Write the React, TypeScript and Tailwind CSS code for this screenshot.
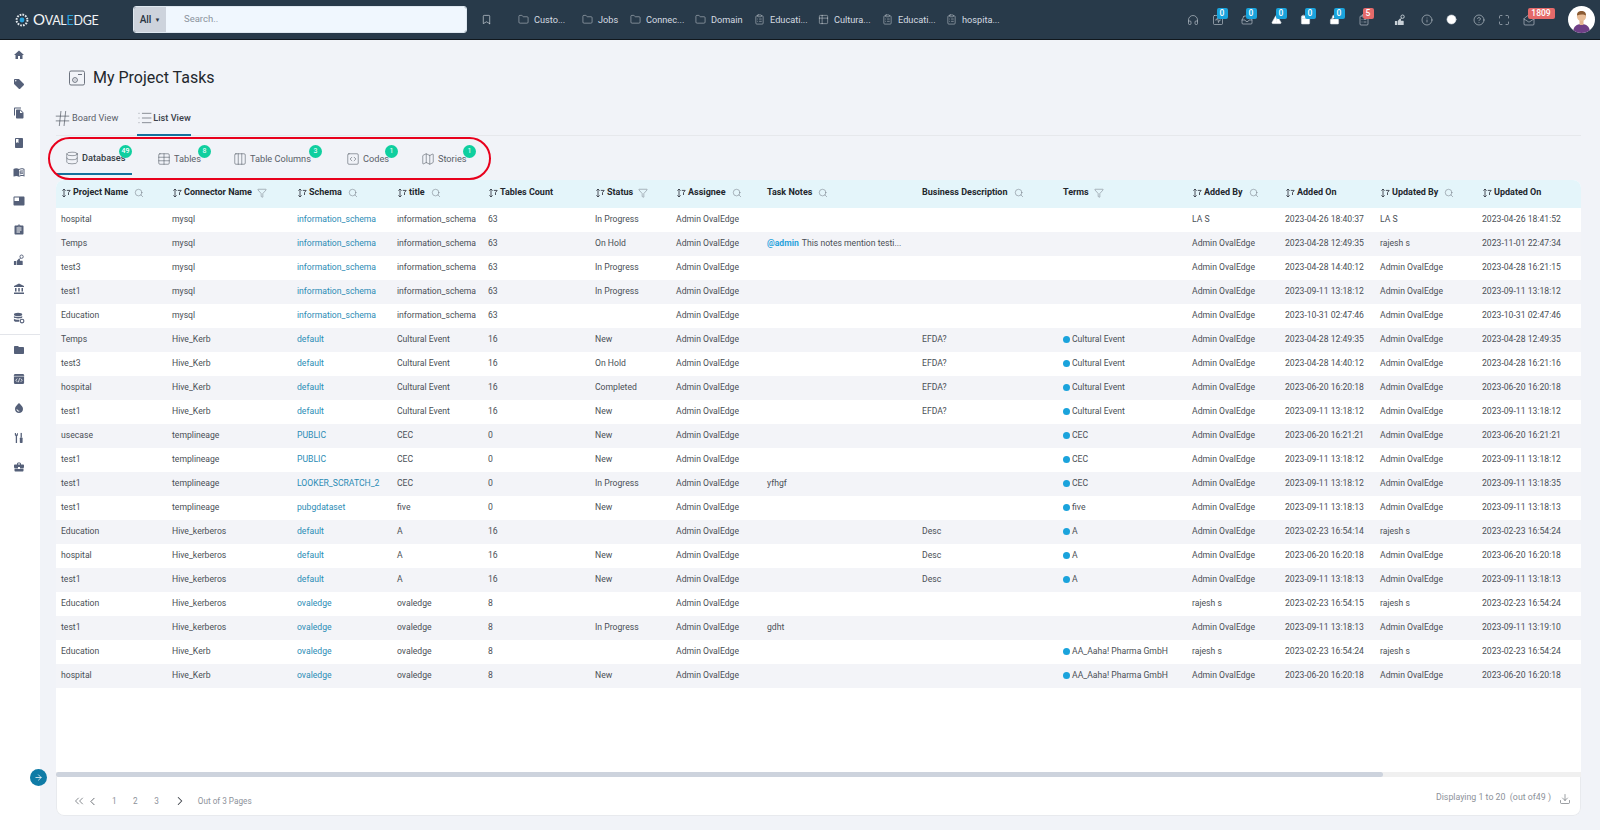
import type { ReactNode } from "react";
import {
  Headphones,
  SquareActivity,
  Inbox,
  Info,
  CircleHelp,
  Maximize,
  MailOpen,
  Search,
  Funnel,
  Bookmark,
  Folder,
  ClipboardList,
  Table2,
  Hash,
  List,
  Database,
  Table,
  Columns3,
  SquareCode,
  Map,
  ChevronsLeft,
  ChevronLeft,
  ChevronRight,
  Download,
  ArrowRight,
  TriangleAlert,
  LockOpen,
  Calendar,
  Circle,
} from "lucide-react";
import {
  MdHome,
  MdLocalOffer,
  MdFileCopy,
  MdBook,
  MdMenuBook,
  MdFeaturedVideo,
  MdAssignment,
  MdAccountBalance,
  MdFolder,
  MdWaterDrop,
  MdBusinessCenter,
} from "react-icons/md";

const cols =
  "grid grid-cols-[111px_125px_100px_91px_107px_81px_91px_155px_141px_129px_93px_95px_102px_105px]";

function HandRing({ size = 13, className = "" }: { size?: number; className?: string }) {
  return (
    <svg width={size} height={size} viewBox="0 0 13 13" fill="currentColor" className={className}>
      <rect x="1" y="7.5" width="2.4" height="4.5" rx="0.4" />
      <path d="M4 7.5 6.5 5l1 .6v1.6h2.2c.6 0 .8.5.8 1V12H4z" />
      <circle cx="9.3" cy="2.9" r="1.8" fill="none" stroke="currentColor" strokeWidth="1" />
      <path d="M8.2 4.4 7 5.8" stroke="currentColor" strokeWidth="1" />
    </svg>
  );
}

function DbGear({ size = 13, className = "" }: { size?: number; className?: string }) {
  return (
    <svg width={size} height={size} viewBox="0 0 13 13" fill="currentColor" className={className}>
      <ellipse cx="5.5" cy="2.6" rx="4.5" ry="1.8" />
      <path d="M1 4.2c1 1.3 8 1.3 9 0v1.8c-1 1.3-8 1.3-9 0zM1 7.3c1 1.3 5 1.3 6 1l-.6 2.3C4 10.9 1.6 10.5 1 9.4z" />
      <circle cx="9.8" cy="9.8" r="2" fill="none" stroke="currentColor" strokeWidth="1.2" />
    </svg>
  );
}

function CodeBox({ size = 13, className = "" }: { size?: number; className?: string }) {
  return (
    <svg width={size} height={size} viewBox="0 0 13 13" className={className}>
      <rect x="1" y="1" width="11" height="11" rx="1.4" fill="currentColor" />
      <path d="M1 3.6h11" stroke="#fff" strokeWidth="0.6" />
      <path d="M4.6 6 3 7.8l1.6 1.8M8.4 6 10 7.8 8.4 9.6M7.2 5.6 5.8 10" fill="none" stroke="#fff" strokeWidth="0.8" />
    </svg>
  );
}

function Tools({ size = 13, className = "" }: { size?: number; className?: string }) {
  return (
    <svg width={size} height={size} viewBox="0 0 13 13" fill="currentColor" className={className}>
      <path d="M2 1v2.4l1 .9V12h1.4V4.3l1-.9V1H4.6v1.8H3.2V1z" />
      <rect x="8.2" y="1" width="1.4" height="5" />
      <rect x="7.4" y="6" width="3" height="6" rx="0.8" />
    </svg>
  );
}

const sideTop = [MdHome, MdLocalOffer, MdFileCopy, MdBook, MdMenuBook, MdFeaturedVideo, MdAssignment, HandRing, MdAccountBalance, DbGear];
const sideBottom = [MdFolder, CodeBox, MdWaterDrop, Tools, MdBusinessCenter];

const shortcuts = [
  { icon: Folder, label: "Custo...", w: "w-[64px]" },
  { icon: Folder, label: "Jobs", w: "w-[48px]" },
  { icon: Folder, label: "Connec...", w: "w-[65px]" },
  { icon: Folder, label: "Domain", w: "w-[59px]" },
  { icon: ClipboardList, label: "Educati...", w: "w-[64px]" },
  { icon: Table2, label: "Cultura...", w: "w-[64px]" },
  { icon: ClipboardList, label: "Educati...", w: "w-[64px]" },
  { icon: ClipboardList, label: "hospita...", w: "w-[64px]" },
];

const headerIcons = [
  { icon: Headphones, ml: "" },
  { icon: SquareActivity, ml: "ml-[11px]", badge: "0" },
  { icon: Inbox, ml: "ml-[15px]", badge: "0" },
  { icon: TriangleAlert, ml: "ml-[16px]", badge: "0", solid: true },
  { icon: Calendar, ml: "ml-[15px]", badge: "0", solid: true },
  { icon: LockOpen, ml: "ml-[15px]", badge: "0", solid: true },
  { icon: ClipboardList, ml: "ml-[15px]", badge: "5", red: true },
  { icon: HandRing, ml: "ml-[22px]" },
  { icon: Info, ml: "ml-[13px]" },
  { icon: Circle, ml: "ml-[11px]", solid: true },
  { icon: CircleHelp, ml: "ml-[13px]" },
  { icon: Maximize, ml: "ml-[11px]" },
  { icon: MailOpen, ml: "ml-[11px]", badge: "1809", red: true },
];

const columns = [
  { label: "Project Name", sort: true, tool: "search" },
  { label: "Connector Name", sort: true, tool: "filter" },
  { label: "Schema", sort: true, tool: "search" },
  { label: "title", sort: true, tool: "search" },
  { label: "Tables Count", sort: true },
  { label: "Status", sort: true, tool: "filter" },
  { label: "Assignee", sort: true, tool: "search" },
  { label: "Task Notes", tool: "search" },
  { label: "Business Description", tool: "search" },
  { label: "Terms", tool: "filter" },
  { label: "Added By", sort: true, tool: "search" },
  { label: "Added On", sort: true },
  { label: "Updated By", sort: true, tool: "search" },
  { label: "Updated On", sort: true },
];

const AO = "Admin OvalEdge";
const IS = "information_schema";
const CE = "Cultural Event";
const AA = "AA_Aaha! Pharma GmbH";

// project, connector, schema, title, count, status, notes, description, term, addedBy, addedOn, updatedBy, updatedOn
const rows = [
  ["hospital", "mysql", IS, IS, "63", "In Progress", "", "", "", "LA S", "2023-04-26 18:40:37", "LA S", "2023-04-26 18:41:52"],
  ["Temps", "mysql", IS, IS, "63", "On Hold", "@", "", "", AO, "2023-04-28 12:49:35", "rajesh s", "2023-11-01 22:47:34"],
  ["test3", "mysql", IS, IS, "63", "In Progress", "", "", "", AO, "2023-04-28 14:40:12", AO, "2023-04-28 16:21:15"],
  ["test1", "mysql", IS, IS, "63", "In Progress", "", "", "", AO, "2023-09-11 13:18:12", AO, "2023-09-11 13:18:12"],
  ["Education", "mysql", IS, IS, "63", "", "", "", "", AO, "2023-10-31 02:47:46", AO, "2023-10-31 02:47:46"],
  ["Temps", "Hive_Kerb", "default", CE, "16", "New", "", "EFDA?", CE, AO, "2023-04-28 12:49:35", AO, "2023-04-28 12:49:35"],
  ["test3", "Hive_Kerb", "default", CE, "16", "On Hold", "", "EFDA?", CE, AO, "2023-04-28 14:40:12", AO, "2023-04-28 16:21:16"],
  ["hospital", "Hive_Kerb", "default", CE, "16", "Completed", "", "EFDA?", CE, AO, "2023-06-20 16:20:18", AO, "2023-06-20 16:20:18"],
  ["test1", "Hive_Kerb", "default", CE, "16", "New", "", "EFDA?", CE, AO, "2023-09-11 13:18:12", AO, "2023-09-11 13:18:12"],
  ["usecase", "templineage", "PUBLIC", "CEC", "0", "New", "", "", "CEC", AO, "2023-06-20 16:21:21", AO, "2023-06-20 16:21:21"],
  ["test1", "templineage", "PUBLIC", "CEC", "0", "New", "", "", "CEC", AO, "2023-09-11 13:18:12", AO, "2023-09-11 13:18:12"],
  ["test1", "templineage", "LOOKER_SCRATCH_2", "CEC", "0", "In Progress", "yfhgf", "", "CEC", AO, "2023-09-11 13:18:12", AO, "2023-09-11 13:18:35"],
  ["test1", "templineage", "pubgdataset", "five", "0", "New", "", "", "five", AO, "2023-09-11 13:18:13", AO, "2023-09-11 13:18:13"],
  ["Education", "Hive_kerberos", "default", "A", "16", "", "", "Desc", "A", AO, "2023-02-23 16:54:14", "rajesh s", "2023-02-23 16:54:24"],
  ["hospital", "Hive_kerberos", "default", "A", "16", "New", "", "Desc", "A", AO, "2023-06-20 16:20:18", AO, "2023-06-20 16:20:18"],
  ["test1", "Hive_kerberos", "default", "A", "16", "New", "", "Desc", "A", AO, "2023-09-11 13:18:13", AO, "2023-09-11 13:18:13"],
  ["Education", "Hive_kerberos", "ovaledge", "ovaledge", "8", "", "", "", "", "rajesh s", "2023-02-23 16:54:15", "rajesh s", "2023-02-23 16:54:24"],
  ["test1", "Hive_kerberos", "ovaledge", "ovaledge", "8", "In Progress", "gdht", "", "", AO, "2023-09-11 13:18:13", AO, "2023-09-11 13:19:10"],
  ["Education", "Hive_Kerb", "ovaledge", "ovaledge", "8", "", "", "", AA, "rajesh s", "2023-02-23 16:54:24", "rajesh s", "2023-02-23 16:54:24"],
  ["hospital", "Hive_Kerb", "ovaledge", "ovaledge", "8", "New", "", "", AA, AO, "2023-06-20 16:20:18", AO, "2023-06-20 16:20:18"],
];

const tabs = [
  { icon: Database, label: "Databases", count: "49", w: "w-[76px] mr-4", left: "left-[63px]", active: true },
  { icon: Table, label: "Tables", count: "8", w: "w-[76px]", left: "left-[50px]" },
  { icon: Columns3, label: "Table Columns", count: "3", w: "w-[113px]", left: "left-[85px]" },
  { icon: SquareCode, label: "Codes", count: "1", w: "w-[75px]", left: "left-[48px]" },
  { icon: Map, label: "Stories", count: "1", w: "w-[90px]", left: "left-[51px]" },
];

function SortIcon() {
  return (
    <svg width="10" height="10" viewBox="0 0 10 10" fill="none" stroke="#3a3f4a" strokeWidth="0.9" className="mr-[2px] shrink-0">
      <path d="M3 9V1M1.4 2.6 3 1l1.6 1.6M1.4 7.4 3 9l1.6-1.6" />
      <path d="M5.8 2.4h3.4L7.5 4.6v2.4" />
    </svg>
  );
}

function Cell({ children }: { children?: ReactNode }) {
  return <div className="flex items-center px-[5px] pb-px whitespace-nowrap overflow-hidden">{children}</div>;
}

function AppHeader() {
  return (
    <header className="h-10 shrink-0 flex items-center bg-[#283a4a] border-b border-[#10171d]">
      <div className="w-[133px] pl-[14px] flex items-center gap-[3px] shrink-0">
        <svg width="16" height="16" viewBox="0 0 16 16">
          <circle cx="8" cy="8" r="5.4" fill="none" stroke="#dfe5ea" strokeWidth="2" strokeDasharray="1.7 1.1" />
          <circle cx="8" cy="8" r="2.4" fill="#2aa3dc" />
        </svg>
        <span className="text-[12.5px] leading-none text-[#f2f4f6] tracking-[-0.3px] whitespace-nowrap font-['Lato',sans-serif]">
          <span className="text-[15px]">O</span>VAL<span className="text-[#2aa3dc]">E</span>DGE
        </span>
      </div>
      <div className="w-[334px] h-[27px] flex shrink-0 rounded-[3px] overflow-hidden border border-[#dfe8f0]">
        <div className="w-[32px] bg-[#cdd3dc] flex items-center justify-center text-[10px] font-medium text-[#29333f]">
          All<span className="ml-[3px] text-[6px]">▼</span>
        </div>
        <div className="flex-1 bg-[#f0f7fe] pl-[18px] flex items-center text-[9.5px] text-[#8b939d]">Search..</div>
      </div>
      <Bookmark size={11} strokeWidth={1.4} className="ml-[14px] text-[#d8dee4] shrink-0" />
      <div className="flex items-center ml-[26px]">
        {shortcuts.map((s, i) => (
          <div key={i} className={`${s.w} flex items-center gap-[5px] text-[9.2px] text-[#d5dbe1] shrink-0 whitespace-nowrap`}>
            <s.icon size={11} strokeWidth={1.1} className="shrink-0 text-[#cfd6dc]" />
            {s.label}
          </div>
        ))}
      </div>
      <div className="ml-auto flex items-center pr-[5.5px]">
        {headerIcons.map((h, i) => (
          <div key={i} className={`relative w-[14px] h-[14px] flex items-center justify-center ${h.ml}`}>
            {h.icon === HandRing ? (
              <HandRing size={12} className="text-[#c9d1d8]" />
            ) : (
              <h.icon
                size={h.solid ? 11 : 12}
                strokeWidth={1.2}
                className="text-[#c9d1d8]"
                fill={h.solid ? "#ffffff" : "none"}
              />
            )}
            {h.badge && (
              <span
                className={`absolute top-[-4.5px] left-[6px] h-[11px] px-[3px] min-w-[11px] rounded-[2px] flex items-center justify-center text-[8.5px] font-medium text-white ${
                  h.red ? "bg-[#e56a6a]" : "bg-[#1aa3dc]"
                } ${h.badge.length > 1 ? "w-[27px]" : ""}`}
              >
                {h.badge}
              </span>
            )}
          </div>
        ))}
        <div className="ml-[32px] w-[27px] h-[27px] rounded-full bg-white overflow-hidden flex items-end justify-center">
          <svg width="27" height="27" viewBox="0 0 27 27">
            <path d="M5 27c0-7 4-9 8.5-9S22 20 22 27z" fill="#6e3f86" />
            <rect x="11.5" y="14" width="4" height="5" fill="#e3b48f" />
            <circle cx="13.5" cy="10.5" r="4.6" fill="#e8bd98" />
            <path d="M9 9.5C9 6 11 5 13.5 5S18 6 18 9.5c-2-1.5-6-1.5-9 0z" fill="#8a5a32" />
          </svg>
        </div>
      </div>
    </header>
  );
}

function Sidebar() {
  return (
    <aside className="w-10 shrink-0 bg-white flex flex-col items-center">
      {sideTop.map((Icon, i) => (
        <div key={i} className="h-[29.3px] flex items-center justify-center pr-[3px] shrink-0">
          <Icon size={12} className="text-[#556079]" />
        </div>
      ))}
      <div className="w-full h-px bg-[#e3e5ea] mt-[1px]" />
      {sideBottom.map((Icon, i) => (
        <div key={i} className="h-[29.3px] flex items-center justify-center pr-[3px] shrink-0">
          <Icon size={12} className="text-[#556079]" />
        </div>
      ))}
    </aside>
  );
}

export default function App() {
  return (
    <div className="relative w-[1600px] h-[830px] overflow-hidden flex flex-col bg-[#f1f3f8] font-['Roboto',sans-serif]">
      <AppHeader />
      <div className="flex flex-1 min-h-0">
        <Sidebar />
        <main className="flex-1 min-w-0 pl-4 pr-[19px]">
          {/* Title */}
          <div className="h-[20px] mt-[28px] flex items-center">
            <svg width="16" height="16" viewBox="0 0 16 16" fill="none" stroke="#5d6470" strokeWidth="0.9" className="ml-[13px] mr-[8px]">
              <rect x="0.5" y="1" width="15" height="14" rx="1.5" />
              <circle cx="6" cy="10" r="2.4" />
              <path d="M9 4.5h4M6 9.5v1" />
            </svg>
            <h1 className="text-[16px] font-normal text-[#23272d]">My Project Tasks</h1>
          </div>

          {/* Board / list switch */}
          <div className="h-[32px] mt-[16px] flex border-b border-[#e6e8ec]">
            <div className="flex items-center h-[32px] pb-[4px] text-[9.2px] text-[#5a6068] mr-[19px]">
              <Hash size={19} strokeWidth={0.8} className="-ml-[3px] text-[#444b55]" />
              Board View
            </div>
            <div className="flex items-center h-[32px] pb-[2px] w-[54px] border-b-2 border-[#14719c] text-[9.2px] font-medium text-[#3a4048] whitespace-nowrap">
              <List size={16} strokeWidth={0.9} className="text-[#444b55] shrink-0" />
              List View
            </div>
          </div>

          {/* Task type tabs */}
          <div className="h-[39px] flex">
            {tabs.map((t) => (
              <div
                key={t.label}
                className={`relative ${t.w} h-[39px] pl-[9px] pt-[6px] flex items-center gap-[3px] text-[9.2px] whitespace-nowrap ${
                  t.active ? "border-b-2 border-[#14719c] font-medium text-[#333a42]" : "text-[#5a6068]"
                }`}
              >
                <t.icon size={14} strokeWidth={0.9} className="shrink-0 text-[#444b55]" />
                {t.label}
                <span className={`absolute top-[9px] ${t.left} h-[13px] min-w-[13px] rounded-full bg-[#0fcf9f] flex items-center justify-center text-[7px] text-white`}>
                  {t.count}
                </span>
              </div>
            ))}
          </div>

          {/* Table */}
          <div className="mt-[5px] bg-white rounded-t-lg rounded-b-lg text-[8.65px] text-[#4a4f56]">
            <div className={`${cols} h-[28px] bg-[#e4f5fa] rounded-t-lg text-[9px] text-[#23272d] font-bold`}>
              {columns.map((c) => (
                <div key={c.label} className="flex items-center px-[5px] pb-[3px] whitespace-nowrap">
                  {c.sort && <SortIcon />}
                  {c.label}
                  {c.tool === "search" && <Search size={10} strokeWidth={1} className="ml-[6px] text-[#555b66]" />}
                  {c.tool === "filter" && <Funnel size={10} strokeWidth={1} className="ml-[5px] text-[#555b66]" />}
                </div>
              ))}
            </div>
            {rows.map((r, i) => (
              <div key={i} className={`${cols} h-[24px] ${i % 2 === 1 ? "bg-[#f3f4f8]" : "bg-white"}`}>
                <Cell>{r[0]}</Cell>
                <Cell>{r[1]}</Cell>
                <Cell>
                  <span className="text-[#2b8cb5]">{r[2]}</span>
                </Cell>
                <Cell>{r[3]}</Cell>
                <Cell>{r[4]}</Cell>
                <Cell>{r[5]}</Cell>
                <Cell>{AO}</Cell>
                <Cell>
                  {r[6] === "@" ? (
                    <>
                      <span className="text-[#2aa3dc] font-bold mr-[3px]">@admin</span>This notes mention testi...
                    </>
                  ) : (
                    r[6]
                  )}
                </Cell>
                <Cell>{r[7]}</Cell>
                <Cell>
                  {r[8] && <span className="w-[7px] h-[7px] rounded-full bg-[#1aa3dc] mr-[2px] shrink-0" />}
                  {r[8]}
                </Cell>
                <Cell>{r[9]}</Cell>
                <Cell>{r[10]}</Cell>
                <Cell>{r[11]}</Cell>
                <Cell>{r[12]}</Cell>
              </div>
            ))}
            <div className="h-[84px]" />
            <div className="h-[5px] bg-[#f0f0f0]">
              <div className="h-full w-[1327px] bg-[#cdd3dd] rounded-[3px]" />
            </div>
            <div className="h-[39px] flex items-center border border-t-0 border-[#e8eaee] rounded-b-lg text-[#8d929a] text-[8.2px] pt-[10px] pl-[15px] pr-[9px]">
              <ChevronsLeft size={14} strokeWidth={1.2} className="text-[#555a62]" />
              <ChevronLeft size={13} strokeWidth={1.5} className="text-[#4b5058]" />
              <span className="ml-[13px]">1</span>
              <span className="ml-[16.5px]">2</span>
              <span className="ml-[16.5px]">3</span>
              <ChevronRight size={14} strokeWidth={1.8} className="text-[#3f444b] ml-[14px]" />
              <span className="ml-[11px]">Out of 3 Pages</span>
              <span className="ml-auto mb-[6px] text-[8.8px]">Displaying 1 to 20 &nbsp;(out of49 )</span>
              <Download size={12} strokeWidth={1.1} className="ml-[8px] mb-[4px] text-[#4b5058]" />
            </div>
          </div>
        </main>
      </div>

      {/* Sidebar expand toggle */}
      <button className="absolute left-[30px] top-[769px] w-[17px] h-[17px] rounded-full bg-[#0f7ba6] flex items-center justify-center">
        <ArrowRight size={9} strokeWidth={2} className="text-white" />
      </button>

      {/* Red annotation around the tabs */}
      <div className="absolute left-[48px] top-[137px] w-[443px] h-[43px] rounded-[22px] border-2 border-[#e8001c] pointer-events-none" />
    </div>
  );
}
